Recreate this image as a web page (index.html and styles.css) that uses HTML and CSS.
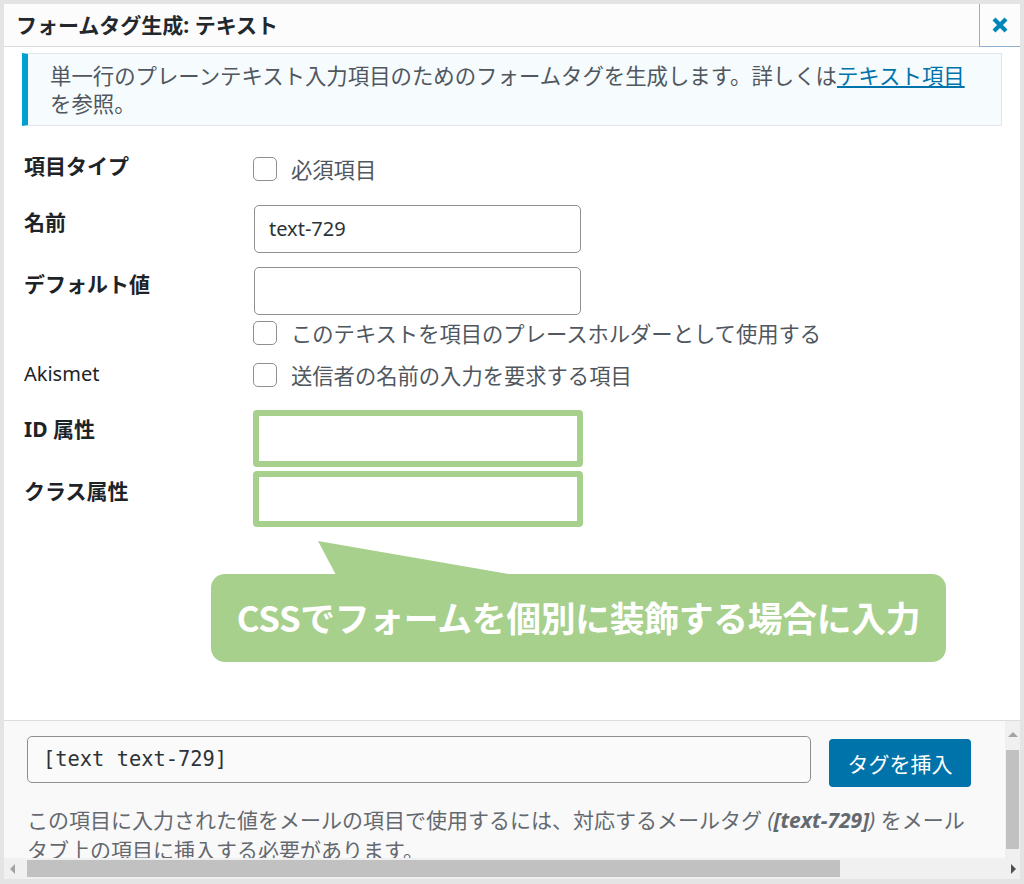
FILE: index.html
```html
<!DOCTYPE html>
<html lang="ja">
<head>
<meta charset="utf-8">
<title>フォームタグ生成: テキスト</title>
<link rel="stylesheet" href="styles.css">
</head>
<body>
<div class="dialog">
  <div class="header">
    <h1 class="title">フォームタグ生成: テキスト</h1>
    <button class="close" aria-label="閉じる">
      <svg width="18" height="18" viewBox="0 0 18 18"><path d="M3 3 L15 15 M15 3 L3 15" stroke="#0085ba" stroke-width="4.2" stroke-linecap="butt"/></svg>
    </button>
  </div>
  <div class="body">
    <div class="notice">単一行のプレーンテキスト入力項目のためのフォームタグを生成します。詳しくは<a class="link" href="#">テキスト項目</a><br>を参照。</div>
    <div class="form">
      <div class="row r1">
        <div class="label">項目タイプ</div>
        <div class="field"><div class="check"><span class="box"></span>必須項目</div></div>
      </div>
      <div class="row r2">
        <div class="label">名前</div>
        <div class="field"><div class="input">text-729</div></div>
      </div>
      <div class="row r3">
        <div class="label">デフォルト値</div>
        <div class="field">
          <div class="input"></div>
          <div class="check check-gap"><span class="box"></span>このテキストを項目のプレースホルダーとして使用する</div>
        </div>
      </div>
      <div class="row r4">
        <div class="label label-normal">Akismet</div>
        <div class="field"><div class="check"><span class="box"></span>送信者の名前の入力を要求する項目</div></div>
      </div>
      <div class="row r5">
        <div class="label">ID 属性</div>
        <div class="field"><div class="green"></div></div>
      </div>
      <div class="row r6">
        <div class="label">クラス属性</div>
        <div class="field"><div class="green green-b"></div></div>
      </div>
    </div>
    <div class="callout">CSSでフォームを個別に装飾する場合に入力</div>
  </div>
  <div class="footer">
    <div class="pane">
      <div class="insert">
        <div class="tag">[text text-729]</div>
        <button class="btn">タグを挿入</button>
      </div>
      <p class="desc">この項目に入力された値をメールの項目で使用するには、対応するメールタグ <em>(<strong>[text-729]</strong>)</em> をメール<br>タブ上の項目に挿入する必要があります。</p>
    </div>
    <div class="vscroll"><span class="up"></span><span class="vthumb"></span></div>
    <div class="hscroll"><span class="arrow-l"></span><span class="hthumb"></span><span class="arrow-r"></span></div>
  </div>
</div>
</body>
</html>
```

FILE: styles.css
```css
html, body {
  margin: 0;
  padding: 0;
}
body {
  background: #e4e4e4;
  padding: 4px 4px 0 4px;
  font-family: "Noto Sans", "Noto Sans CJK JP", sans-serif;
  color: #1d2327;
}
.dialog {
  width: 1016px;
  height: 875px;
  background: #fff;
  display: flex;
  flex-direction: column;
  overflow: hidden;
}
.header {
  height: 42px;
  flex: none;
  display: flex;
  align-items: center;
  background: #fcfcfc;
  border-bottom: 1px solid #dcdcde;
}
.title {
  flex: 1;
  margin: 0;
  padding-left: 12px;
  font-size: 21px;
  font-weight: 700;
  line-height: 28px;
  color: #23282d;
}
.close {
  width: 41px;
  height: 43px;
  align-self: flex-start;
  box-sizing: border-box;
  border: 0;
  border-left: 1px solid #8fb0d2;
  border-bottom: 1px solid #8fb0d2;
  background: #fcfcfc;
  display: flex;
  align-items: center;
  justify-content: center;
  padding: 0;
}
.body {
  flex: 1;
  position: relative;
  padding: 0 18px;
}
.notice {
  margin-top: 6px;
  border: 1px solid #e0e6ea;
  border-left: 6px solid #00a0d2;
  background: #f6fbfe;
  padding: 7px 20px 8px 22px;
  font-size: 21.4px;
  line-height: 28px;
  color: #50575e;
  font-family: "Noto Sans CJK JP", sans-serif;
  white-space: nowrap;
}
.link {
  color: #0073aa;
  text-decoration: underline;
}
.form {
  padding-left: 2px;
}
.row {
  display: grid;
  grid-template-columns: 229px 1fr;
  align-items: start;
}
.label {
  font-size: 21px;
  font-weight: 700;
  line-height: 28px;
  color: #1d2327;
  font-family: "Noto Sans", "Noto Sans CJK JP", sans-serif;
}
.label-normal {
  font-weight: 400;
  font-size: 20px;
}
.r1 { margin-top: 26px; }
.r1 .field { padding-top: 5px; }
.r2 { margin-top: 24px; }
.r2 .label { padding-top: 3px; }
.r3 { margin-top: 14px; }
.r3 .label { padding-top: 3px; }
.r4 { margin-top: 15px; }
.r4 .field { padding-top: 3px; }
.r5 { margin-top: 22px; }
.r5 .label { padding-top: 5px; }
.r6 { margin-top: 4px; }
.r6 .label { padding-top: 6px; }
.check {
  display: flex;
  align-items: center;
  gap: 14px;
  height: 24px;
  font-size: 21.3px;
  line-height: 24px;
  color: #50575e;
  font-family: "Noto Sans CJK JP", sans-serif;
  white-space: nowrap;
}
.check-gap {
  margin-top: 6px;
}
.box {
  flex: none;
  width: 24px;
  height: 24px;
  box-sizing: border-box;
  border: 1.5px solid #8c8f94;
  border-radius: 5px;
  background: #fff;
}
.input {
  width: 327px;
  height: 48px;
  margin-left: 1px;
  box-sizing: border-box;
  border: 1px solid #8c8f94;
  border-radius: 5px;
  padding: 0 14px;
  font-size: 20px;
  line-height: 46px;
  color: #2c3338;
  background: #fff;
}
.green {
  width: 330px;
  height: 57px;
  box-sizing: border-box;
  border: 6px solid #a8d08d;
  border-radius: 4px;
  background: #fff;
}
.green-b {
  height: 56px;
}
.callout {
  position: absolute;
  left: 207px;
  top: 527px;
  width: 735px;
  height: 88px;
  background: #a8d08d;
  border-radius: 14px;
  color: #fff;
  font-family: "Noto Sans CJK JP", sans-serif;
  font-weight: 700;
  font-size: 34.8px;
  line-height: 86px;
  text-align: center;
  letter-spacing: -0.3px;
}
.callout::before {
  content: "";
  position: absolute;
  left: 107px;
  top: -33px;
  width: 197px;
  height: 34px;
  background: #a8d08d;
  clip-path: polygon(0 0, 18px 100%, 100% 100%);
}
.footer {
  flex: none;
  border-top: 1px solid #dcdcde;
  display: grid;
  grid-template-columns: 1fr 15px;
  grid-template-rows: 137px 21px;
  background: #f9f9f9;
}
.pane {
  overflow: hidden;
  padding: 15px 0 0 23px;
}
.insert {
  display: flex;
  align-items: flex-start;
}
.tag {
  width: 784px;
  height: 47px;
  box-sizing: border-box;
  border: 1px solid #8c8f94;
  border-radius: 5px;
  padding-left: 15px;
  font-family: "DejaVu Sans Mono", monospace;
  font-size: 20.4px;
  line-height: 45px;
  color: #2c3338;
  background: #fafafa;
}
.btn {
  margin-left: 18px;
  margin-top: 3px;
  width: 142px;
  height: 48px;
  border: 0;
  border-radius: 4px;
  background: #0073aa;
  color: #fff;
  font-family: "Noto Sans CJK JP", sans-serif;
  font-size: 21px;
  padding: 0;
}
.desc {
  margin: 18px 0 0 0;
  font-size: 21px;
  line-height: 30px;
  color: #646970;
  white-space: nowrap;
  font-family: "Noto Sans", "Noto Sans CJK JP", sans-serif;
}
.desc em {
  font-style: italic;
}
.vscroll {
  background: #f0f0f0;
  display: flex;
  flex-direction: column;
  align-items: center;
}
.up {
  margin-top: 11px;
  width: 0;
  height: 0;
  border-left: 5px solid transparent;
  border-right: 5px solid transparent;
  border-bottom: 5px solid #a3a3a3;
}
.vthumb {
  margin-top: 13px;
  width: 13px;
  height: 99px;
  background: #c1c1c1;
}
.hscroll {
  grid-column: 1 / -1;
  background: #f0f0f0;
  display: flex;
  align-items: center;
}
.arrow-l {
  margin-left: 6px;
  width: 0;
  height: 0;
  border-top: 5px solid transparent;
  border-bottom: 5px solid transparent;
  border-right: 5px solid #a3a3a3;
}
.hthumb {
  margin-left: 12px;
  width: 813px;
  height: 17px;
  background: #c1c1c1;
}
.arrow-r {
  margin-left: auto;
  margin-right: 4px;
  width: 0;
  height: 0;
  border-top: 5px solid transparent;
  border-bottom: 5px solid transparent;
  border-left: 5px solid #505050;
}
```
